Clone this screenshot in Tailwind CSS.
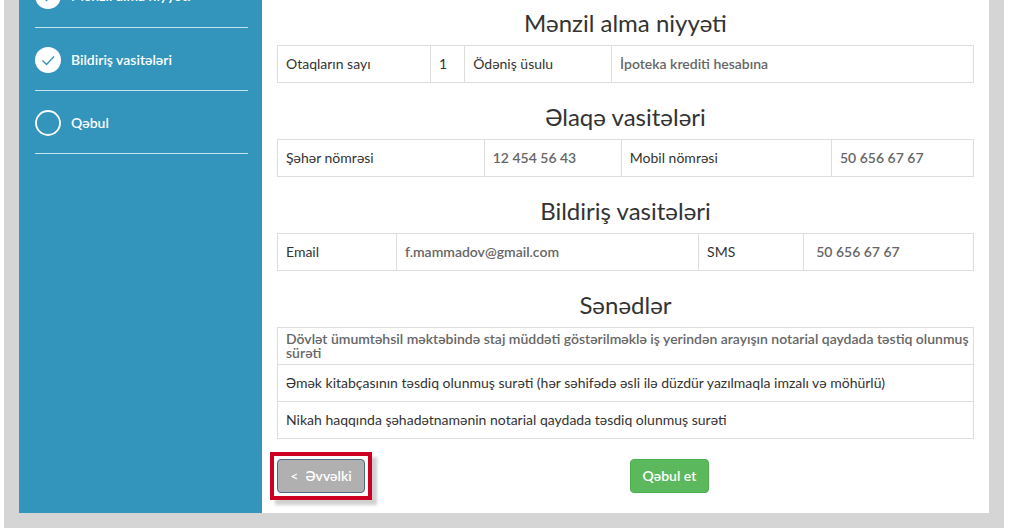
<!DOCTYPE html>
<html lang="az">
<head>
<meta charset="utf-8">
<meta name="viewport" content="width=device-width, initial-scale=1">
<title>Müraciət</title>
<script src="https://cdn.jsdelivr.net/npm/@tailwindcss/browser@4"></script>
</head>
<body class="bg-white pl-1 pr-[5px] font-['Lato','Noto_Sans',sans-serif] text-sm text-[#333333]">
<div class="flex bg-[#d5d5d5] px-[15px] pb-[15px]">
  <nav class="-mt-9 w-[243px] shrink-0 bg-[#3394bc] pl-4 pr-[14px] font-semibold text-white">
    <ul>
      <li class="border-b border-[#c5e5f0]">
        <a href="#" class="flex h-[63px] items-center gap-[10px] pt-px">
          <svg class="size-[26px] shrink-0" viewBox="0 0 26 26" aria-hidden="true"><circle cx="13" cy="13" r="13" fill="#fff"/><path d="M7.500 13.500l4 4 7.500-8" fill="none" stroke="#3394bc" stroke-width="1.300"/></svg>
          Mənzil alma niyyəti
        </a>
      </li>
      <li class="border-b border-[#c5e5f0]">
        <a href="#" class="flex h-[62px] items-center gap-[10px] pt-px">
          <svg class="size-[26px] shrink-0" viewBox="0 0 26 26" aria-hidden="true"><circle cx="13" cy="13" r="13" fill="#fff"/><path d="M7.500 13.500l4 4 7.500-8" fill="none" stroke="#3394bc" stroke-width="1.300"/></svg>
          Bildiriş vasitələri
        </a>
      </li>
      <li class="border-b border-[#c5e5f0]">
        <a href="#" class="flex h-[62px] items-center gap-[10px] pt-px">
          <svg class="size-[26px] shrink-0" viewBox="0 0 26 26" aria-hidden="true"><circle cx="13" cy="13" r="12" fill="none" stroke="#fff" stroke-width="1.800"/></svg>
          Qəbul
        </a>
      </li>
    </ul>
  </nav>
  <main class="min-w-0 grow bg-white px-[15px] pb-[13px] pt-[10px]">
    <h2 class="mb-[9px] text-center text-2xl leading-[26px]">Mənzil alma niyyəti</h2>
    <table class="w-full table-fixed border-collapse text-left [&_:is(th,td)]:h-[37px] [&_:is(th,td)]:border [&_:is(th,td)]:border-[#dddddd] [&_:is(th,td)]:px-2 [&_th]:font-normal">
      <tbody><tr>
        <th scope="row" class="w-[22%]">Otaqların sayı</th>
        <td class="w-[4.9%]">1</td>
        <th scope="row" class="w-[21.1%]">Ödəniş üsulu</th>
        <td class="font-semibold text-[#666666]">İpoteka krediti hesabına</td>
      </tr></tbody>
    </table>
    <h2 class="mb-[9px] mt-[21px] text-center text-2xl leading-[26px]">Əlaqə vasitələri</h2>
    <table class="w-full table-fixed border-collapse text-left [&_:is(th,td)]:h-[37px] [&_:is(th,td)]:border [&_:is(th,td)]:border-[#dddddd] [&_:is(th,td)]:px-2 [&_th]:font-normal">
      <tbody><tr>
        <th scope="row" class="w-[29.7%]">Şəhər nömrəsi</th>
        <td class="w-[19.7%] font-semibold text-[#666666]">12 454 56 43</td>
        <th scope="row" class="w-[30.2%]">Mobil nömrəsi</th>
        <td class="font-semibold text-[#666666]">50 656 67 67</td>
      </tr></tbody>
    </table>
    <h2 class="mb-[9px] mt-[21px] text-center text-2xl leading-[26px]">Bildiriş vasitələri</h2>
    <table class="w-full table-fixed border-collapse text-left [&_:is(th,td)]:h-[37px] [&_:is(th,td)]:border [&_:is(th,td)]:border-[#dddddd] [&_:is(th,td)]:px-2 [&_th]:font-normal">
      <tbody><tr>
        <th scope="row" class="w-[17.1%]">Email</th>
        <td class="w-[43.4%] font-semibold text-[#666666]">f.mammadov@gmail.com</td>
        <th scope="row" class="w-[15.1%]">SMS</th>
        <td class="font-semibold text-[#666666]"><span class="pl-1">50 656 67 67</span></td>
      </tr></tbody>
    </table>
    <h2 class="mb-[9px] mt-[21px] text-center text-2xl leading-[26px]">Sənədlər</h2>
    <table class="w-full table-fixed border-collapse [&_td]:h-[37px] [&_td]:border [&_td]:border-[#dddddd] [&_td]:pl-2">
      <tbody>
        <tr><td class="font-semibold leading-[14px] text-[#666666]">Dövlət ümumtəhsil məktəbində staj müddəti göstərilməklə iş yerindən arayışın notarial qaydada təstiq olunmuş sürəti</td></tr>
        <tr><td>Əmək kitabçasının təsdiq olunmuş surəti (hər səhifədə əsli ilə düzdür yazılmaqla imzalı və möhürlü)</td></tr>
        <tr><td>Nikah haqqında şəhadətnamənin notarial qaydada təsdiq olunmuş surəti</td></tr>
      </tbody>
    </table>
    <div class="mt-[13px] grid grid-cols-2 items-center gap-2 font-semibold text-white">
      <div class="-ml-[7px] w-[102px] border-4 border-[#cc0022] p-[3px] shadow-[5px_5px_3px_#00000030]">
        <button type="button" class="h-[34px] w-full whitespace-pre rounded border border-[#4f6b8c] bg-[#b0b0b0]">&lt;  Əvvəlki</button>
      </div>
      <button type="button" class="h-[34px] justify-self-start rounded border border-[#4cae4c] bg-[#5cb85c] px-3">Qəbul et</button>
    </div>
  </main>
</div>
</body>
</html>
